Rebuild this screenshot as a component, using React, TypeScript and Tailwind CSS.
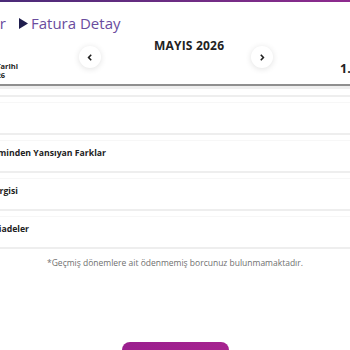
import React from "react";

function Clip({ w, children, className = "" }: { w: string; children: React.ReactNode; className?: string }) {
  // texte aligné à droite qui déborde à gauche de l'écran
  return <div className={`flex justify-end whitespace-nowrap ${w} ${className}`}>{children}</div>;
}

function ArrowBtn({ dir }: { dir: "prev" | "next" }) {
  return (
    <div className="w-[22px] h-[22px] rounded-full bg-white shadow-[0_1px_6px_rgba(0,0,0,0.12)] flex items-center justify-center shrink-0">
      <svg width="6" height="7" viewBox="0 0 6 7">
        {dir === "prev" ? (
          <path d="M4.2 0.8 L1.6 3.5 L4.2 6.2" fill="none" stroke="#222" strokeWidth="1.6" />
        ) : (
          <path d="M1.8 0.8 L4.4 3.5 L1.8 6.2" fill="none" stroke="#222" strokeWidth="1.6" />
        )}
      </svg>
    </div>
  );
}

const ROWS = [
  { label: "", w: "w-[0px]" },
  { label: "Önceki Döneminden Yansıyan Farklar", w: "w-[106px]" },
  { label: "Özel İletişim Vergisi", w: "w-[18px]" },
  { label: "Diğer iadeler", w: "w-[29px]" },
];

export default function App() {
  return (
    <div className="w-[350px] h-[350px] overflow-hidden bg-white font-['Open_Sans',sans-serif] text-[#222]">
      {/* bandeau */}
      <div className="h-[2px] bg-gradient-to-r from-[#4a2a78] to-[#8e2a8e]" />

      {/* fil d'ariane */}
      <div className="mt-[11px] h-[20px] flex items-center text-[15px] text-[#6a4c9e]">
        <Clip w="w-[6px]">Faturalar</Clip>
        <svg width="9" height="11" viewBox="0 0 9 11" className="ml-[13px] shrink-0">
          <path d="M0 0 L9 5.5 L0 11 Z" fill="#1f1d4d" />
        </svg>
        <span className="ml-[3px] whitespace-nowrap">Fatura Detay</span>
      </div>

      {/* mois */}
      <div className="flex h-[51px]">
        <div className="w-[18px] shrink-0 flex flex-col justify-end pb-[4px] text-[7.5px] font-bold leading-[9px]">
          <Clip w="w-[18px]">Son Ödeme Tarihi</Clip>
          <Clip w="w-[5px]">16.06.2026</Clip>
        </div>
        <div className="ml-[61px] mt-[13px]">
          <ArrowBtn dir="prev" />
        </div>
        <div className="ml-[53px] mt-[5px] w-[68px] shrink-0 text-center whitespace-nowrap text-[12px] font-bold leading-[16px] tracking-[0.2px]">
          MAYIS 2026
        </div>
        <div className="ml-[29px] mt-[13px]">
          <ArrowBtn dir="next" />
        </div>
        <div className="ml-[67px] mt-[28px] whitespace-nowrap text-[12.5px] font-bold leading-[16px]">
          1.234,56 TL
        </div>
      </div>

      <div className="h-[2px] bg-[#8f8f8f]" />
      <div className="h-[3px] bg-[#e4e4e4] opacity-60" />

      {/* lignes */}
      <div className="mt-[6px]">
        {ROWS.map((r, i) => (
          <div key={i} className="border-t-2 border-[#eeeeee]">
            <div className="h-px bg-[#f7f7f7] mt-[5px]" />
            <div className="h-[30px] flex items-center text-[8.7px] font-bold pb-[4px]">
              {r.label && <Clip w={r.w}>{r.label}</Clip>}
            </div>
          </div>
        ))}
        <div className="border-t-2 border-[#eeeeee]" />
      </div>

      <p className="mt-[8px] text-center text-[8.5px] text-[#707070] whitespace-nowrap">
        *Geçmiş dönemlere ait ödenmemiş borcunuz bulunmamaktadır.
      </p>

      <div className="mt-[72px] flex justify-center">
        <button className="w-[107px] h-[30px] rounded-[8px] bg-gradient-to-r from-[#9a1f8e] to-[#a6238f] text-white text-[10px] font-bold">
          Öde
        </button>
      </div>
    </div>
  );
}
